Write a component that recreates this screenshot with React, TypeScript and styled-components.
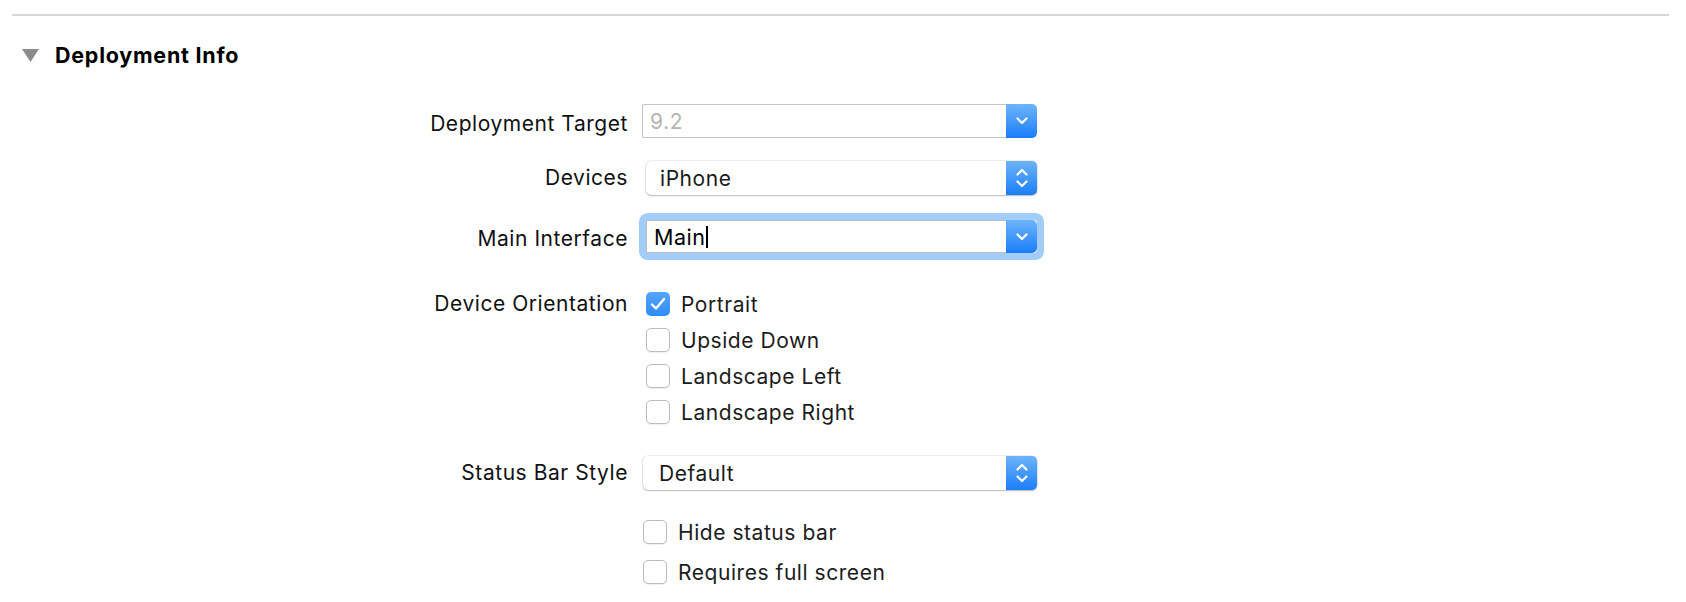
import React from 'react'
import styled, { createGlobalStyle, css } from 'styled-components'

const GlobalStyle = createGlobalStyle`
  html, body {
    margin: 0;
    padding: 0;
    background: #ffffff;
  }

  body {
    font-family: Inter, "Liberation Sans", sans-serif;
    font-size: 21px;
    letter-spacing: 0.55px;
    color: #111111;
    -webkit-font-smoothing: antialiased;
  }
`

const Page = styled.div`
  width: 1686px;
  height: 602px;
  overflow: hidden;
  padding-top: 14px;
  box-sizing: border-box;
`

const Divider = styled.div`
  height: 2px;
  margin: 0 17px 0 12px;
  background: #d6d6d6;
`

const SectionHeader = styled.div`
  display: flex;
  align-items: center;
  gap: 16px;
  height: 24px;
  margin-top: 27px;
  padding-left: 22px;
`

const Heading = styled.h2`
  margin: 0;
  font-size: 21.5px;
  font-weight: 700;
  letter-spacing: 0.75px;
  line-height: 24px;
  color: #000000;
`

const Form = styled.div`
  display: flex;
  flex-direction: column;
  margin-top: 37px;
`

const Row = styled.div<{ $top?: number; $align?: string }>`
  display: grid;
  grid-template-columns: 628px 395px;
  column-gap: 14px;
  align-items: ${props => props.$align ?? 'center'};
  margin-top: ${props => props.$top ?? 0}px;
`

const Label = styled.div<{ $shift?: number }>`
  padding-top: ${props => props.$shift ?? 0}px;
  text-align: right;
  line-height: 24px;
  color: #111111;
  white-space: nowrap;
`

const PopUp = styled.div<{ $raised?: boolean; $inset?: number }>`
  display: flex;
  height: 34px;
  margin-left: ${props => props.$inset ?? 0}px;
  border-radius: ${props => (props.$raised ? '5px' : '2px 5px 5px 2px')};
  background: #ffffff;
  ${props =>
    props.$raised &&
    css`
      box-shadow: 0 0 0 0.5px rgba(0, 0, 0, 0.14), 0 1px 1.5px rgba(0, 0, 0, 0.22);
    `}
`

const PopUpValue = styled.div<{ $raised?: boolean; $pad: number; $dim?: boolean }>`
  flex: 1;
  display: flex;
  align-items: center;
  padding-left: ${props => props.$pad}px;
  color: ${props => (props.$dim ? '#b3b3b3' : '#1a1a1a')};
  ${props =>
    !props.$raised &&
    css`
      border: 1px solid #c4c4c4;
      border-right: none;
      border-radius: 2px 0 0 2px;
    `}
`

const PopUpButton = styled.div`
  display: flex;
  align-items: center;
  justify-content: center;
  flex: none;
  width: 31px;
  background: linear-gradient(#6db4fb, #1b7ef9);
  border-radius: 0 5px 5px 0;
`

const ComboBox = styled.div`
  display: flex;
  height: 33px;
  margin-left: 4px;
  border-radius: 3px;
  box-shadow: 0 0 0 7px #a2cdf8;
  background: #ffffff;
`

const ComboField = styled.div`
  flex: 1;
  display: flex;
  align-items: center;
  padding-left: 7px;
  border: 1px solid #bdbdbd;
  border-right: none;
  font-size: 21.5px;
  color: #000000;
`

const Caret = styled.span`
  display: inline-block;
  width: 2px;
  height: 22px;
  margin-left: 0;
  background: #000000;
`

const CheckList = styled.div<{ $gap: number; $inset: number }>`
  display: flex;
  flex-direction: column;
  gap: ${props => props.$gap}px;
  margin-left: ${props => props.$inset}px;
`

const Option = styled.label`
  display: flex;
  align-items: center;
  gap: 11px;
  height: 24px;
  color: #1c1c1c;
`

const Box = styled.span<{ $checked?: boolean }>`
  display: flex;
  align-items: center;
  justify-content: center;
  width: 24px;
  height: 24px;
  box-sizing: border-box;
  border-radius: 5px;
  ${props =>
    props.$checked
      ? css`
          background: linear-gradient(#55a6fa, #2f8bf7);
        `
      : css`
          background: #ffffff;
          border: 1px solid #bcbcbc;
          box-shadow: 0 1px 1px rgba(0, 0, 0, 0.06);
        `}
`

const Disclosure = () => (
  <svg width="17" height="13" viewBox="0 0 17 13">
    <polygon points="0,0 17,0 8.5,13" fill="#8c8c8c" />
  </svg>
)

const ChevronDown = () => (
  <svg width="12" height="8" viewBox="0 0 12 8">
    <path d="M1.5 1.5 L6 6 L10.5 1.5" fill="none" stroke="#fff" strokeWidth="2.2" strokeLinecap="round" strokeLinejoin="round" />
  </svg>
)

const ChevronUpDown = () => (
  <svg width="12" height="20" viewBox="0 0 12 20">
    <path d="M1.5 6.5 L6 2 L10.5 6.5" fill="none" stroke="#fff" strokeWidth="2.2" strokeLinecap="round" strokeLinejoin="round" />
    <path d="M1.5 13.5 L6 18 L10.5 13.5" fill="none" stroke="#fff" strokeWidth="2.2" strokeLinecap="round" strokeLinejoin="round" />
  </svg>
)

const Check = () => (
  <svg width="16" height="14" viewBox="0 0 16 14">
    <path d="M2 7.5 L6 11.5 L14 2" fill="none" stroke="#fff" strokeWidth="2.4" strokeLinecap="round" strokeLinejoin="round" />
  </svg>
)

type CheckItemProps = {
  label: string
  checked?: boolean
}

const CheckItem = ({ label, checked }: CheckItemProps) => (
  <Option>
    <Box $checked={checked}>{checked && <Check />}</Box>
    {label}
  </Option>
)

const orientations = [
  { label: 'Portrait', checked: true },
  { label: 'Upside Down' },
  { label: 'Landscape Left' },
  { label: 'Landscape Right' },
]

export default function App() {
  return (
    <Page>
      <GlobalStyle />
      <Divider />
      <SectionHeader>
        <Disclosure />
        <Heading>Deployment Info</Heading>
      </SectionHeader>

      <Form>
        <Row>
          <Label $shift={5}>Deployment Target</Label>
          <PopUp>
            <PopUpValue $pad={7} $dim>
              9.2
            </PopUpValue>
            <PopUpButton>
              <ChevronDown />
            </PopUpButton>
          </PopUp>
        </Row>

        <Row $top={23}>
          <Label>Devices</Label>
          <PopUp $raised $inset={4}>
            <PopUpValue $raised $pad={14}>
              iPhone
            </PopUpValue>
            <PopUpButton>
              <ChevronUpDown />
            </PopUpButton>
          </PopUp>
        </Row>

        <Row $top={25}>
          <Label $shift={4}>Main Interface</Label>
          <ComboBox>
            <ComboField>
              Main
              <Caret />
            </ComboField>
            <PopUpButton>
              <ChevronDown />
            </PopUpButton>
          </ComboBox>
        </Row>

        <Row $top={39} $align="start">
          <Label>Device Orientation</Label>
          <CheckList $gap={12} $inset={4}>
            {orientations.map(o => (
              <CheckItem key={o.label} label={o.label} checked={o.checked} />
            ))}
          </CheckList>
        </Row>

        <Row $top={32}>
          <Label>Status Bar Style</Label>
          <PopUp $raised $inset={1}>
            <PopUpValue $raised $pad={16}>
              Default
            </PopUpValue>
            <PopUpButton>
              <ChevronUpDown />
            </PopUpButton>
          </PopUp>
        </Row>

        <Row $top={30}>
          <div />
          <CheckList $gap={16} $inset={1}>
            <CheckItem label="Hide status bar" />
            <CheckItem label="Requires full screen" />
          </CheckList>
        </Row>
      </Form>
    </Page>
  )
}
